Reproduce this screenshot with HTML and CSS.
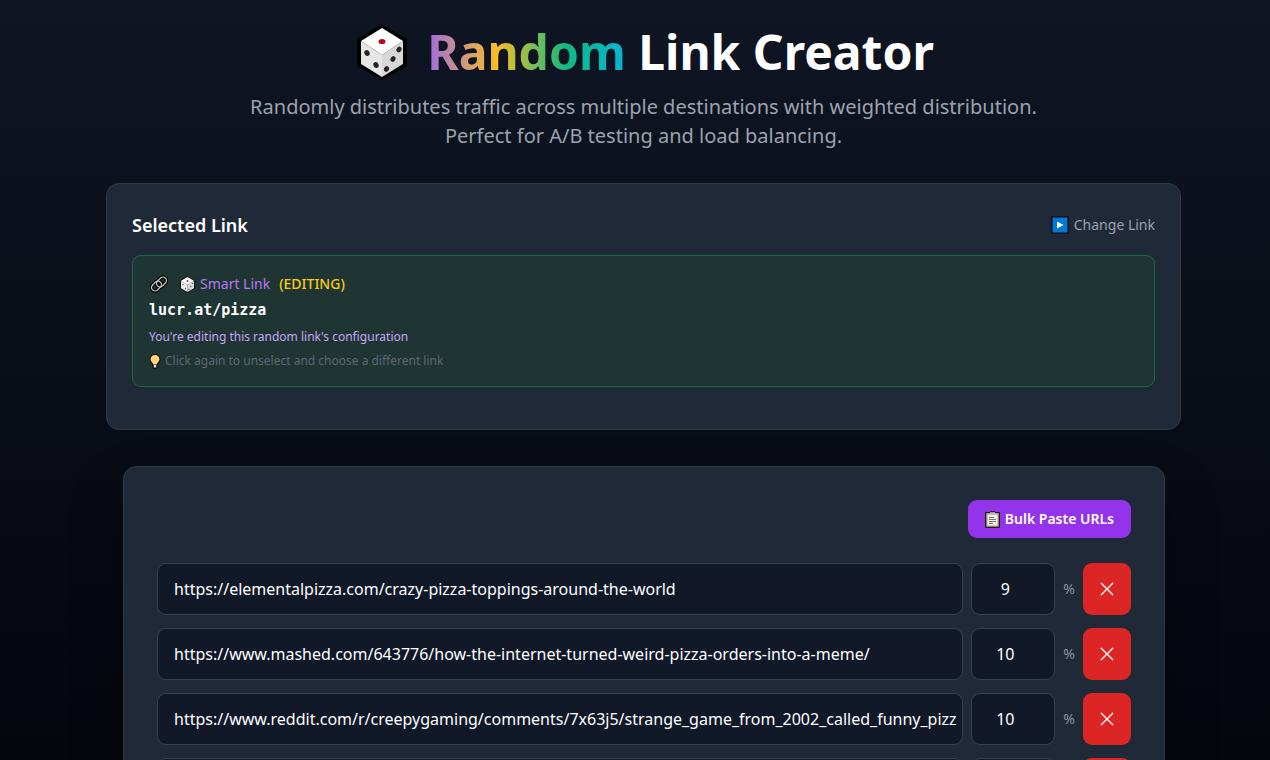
FILE: index.html
```html
<!DOCTYPE html>
<html lang="en">
	<head>
		<meta charset="UTF-8">
		<meta name="viewport" content="width=device-width,initial-scale=1" />
		<title>Random Link Creator</title>
		<link rel="stylesheet" href="styles.css">
	</head>
	<body>
		<svg class="defs" width="0" height="0" aria-hidden="true">
			<symbol id="dice" viewBox="0 0 50 56">
				<path d="M25 0L50 15V42L25 56L0 42V15Z" fill="#000"/>
				<path d="M25 4L46 17L25 31L4 17Z" fill="#fff"/>
				<path d="M4 17L25 31V53L4 40Z" fill="#e6e6e6"/>
				<path d="M46 17L25 31V53L46 40Z" fill="#d8d8d8"/>
				<ellipse cx="25" cy="17.500" rx="3.5" ry="2.6" fill="#b30d1c"/>
				<g fill="#252525">
					<ellipse cx="10" cy="29" rx="2.6" ry="3" transform="rotate(-25 10 29)"/>
					<ellipse cx="19" cy="41" rx="2.6" ry="3" transform="rotate(-25 19 41)"/>
					<ellipse cx="42" cy="25.500" rx="2.4" ry="3" transform="rotate(30 42 25.500)"/>
					<ellipse cx="36" cy="35" rx="2.4" ry="3" transform="rotate(30 36 35)"/>
					<ellipse cx="29.500" cy="45" rx="2.4" ry="3" transform="rotate(30 29.500 45)"/>
				</g>
			</symbol>
			<symbol id="dice-small" viewBox="0 0 15 17">
				<path d="M7.500 0L15 4.500V12.500L7.500 17L0 12.500V4.500Z" fill="#0a0f0f"/>
				<path d="M7.500 1L14 4.800L7.500 8.800L1 4.800Z" fill="#fff"/>
				<path d="M1 4.800L7.500 8.800V16L1 12.200Z" fill="#ececec"/>
				<path d="M14 4.800L7.500 8.800V16L14 12.200Z" fill="#dcdcdc"/>
				<circle cx="7.500" cy="5" r="1" fill="#d0202c"/>
				<g fill="#555"><circle cx="3" cy="8.500" r=".7"/><circle cx="5.500" cy="12.500" r=".7"/><circle cx="12.500" cy="7.500" r=".7"/><circle cx="10.800" cy="10.500" r=".7"/><circle cx="9" cy="13.500" r=".7"/></g>
			</symbol>
		</svg>
		<main class="page">
			<header class="hero">
				<h1><svg class="hero-dice" aria-hidden="true"><use href="#dice"/></svg><span><span class="rainbow">Random</span> Link Creator</span></h1>
				<p>Randomly distributes traffic across multiple destinations with weighted distribution. Perfect for A/B testing and load balancing.</p>
			</header>

			<section class="card">
				<div class="card-head">
					<h2>Selected Link</h2>
					<button type="button" class="change">
						<svg width="18" height="18" viewBox="0 0 18 18" aria-hidden="true"><rect width="18" height="18" rx="1" fill="#0c1118"/><rect x="1.500" y="1.500" width="15" height="15" fill="#0078d7"/><path d="M6 5.500L12.500 9L6 12.500Z" fill="#fff"/></svg>
						Change Link
					</button>
				</div>
				<div class="selected">
					<div class="kind">
						<svg class="chain" width="18" height="18" viewBox="0 0 18 18" fill="none" aria-hidden="true">
							<g stroke="#000" stroke-width="3.600"><rect x="6" y="3.500" width="11" height="7" rx="3.500" transform="rotate(-45 11.500 7)"/><rect x="1" y="7.500" width="11" height="7" rx="3.500" transform="rotate(-45 6.500 11)"/></g>
							<g stroke="#c8c8c8" stroke-width="1.300"><rect x="6" y="3.500" width="11" height="7" rx="3.500" transform="rotate(-45 11.500 7)"/><rect x="1" y="7.500" width="11" height="7" rx="3.500" transform="rotate(-45 6.500 11)"/></g>
						</svg>
						<span class="smart"><svg width="15" height="17" aria-hidden="true"><use href="#dice-small"/></svg>Smart Link</span>
						<span class="editing">(EDITING)</span>
					</div>
					<div class="slug">lucr.at/pizza</div>
					<p class="note">You're editing this random link's configuration</p>
					<p class="hint">
						<svg width="12" height="15" viewBox="0 0 12 15" aria-hidden="true"><path d="M6 0A5.500 5.500 0 0 0 .5 5.500C.5 8 2.500 9 3.500 11V14L5 15H7L8.500 14V11C9.500 9 11.500 8 11.500 5.500A5.500 5.500 0 0 0 6 0Z" fill="#111"/><path d="M6 1A4.500 4.500 0 0 0 1.500 5.500C1.500 7.500 3.800 8.500 4.400 10.500H7.600C8.200 8.500 10.500 7.500 10.500 5.500A4.500 4.500 0 0 0 6 1Z" fill="#ffd679"/><path d="M4.800 11H7.200V13.500H4.800Z" fill="#e6e6e6"/></svg>
						Click again to unselect and choose a different link
					</p>
				</div>
			</section>

			<form class="card links">
				<div class="tools">
					<button type="button" class="bulk">
						<svg width="15" height="17" viewBox="0 0 15 17" aria-hidden="true"><path d="M1 1H5V0H10V1H14Q15 1 15 2V16Q15 17 14 17H1Q0 17 0 16V2Q0 1 1 1Z" fill="#211a1a"/><path d="M1.200 2H13.800V15.800H1.200Z" fill="#b59a80"/><path d="M2.500 3.500H12.500V14.500H2.500Z" fill="#eee"/><path d="M5 1.200H10V3.800H5Z" fill="#bbb"/><path d="M4 6.500H9M4 8.500H11M4 10.500H11M4 12.500H8" stroke="#777"/></svg>
						Bulk Paste URLs
					</button>
				</div>
				<div class="row">
					<input class="url" type="text" aria-label="Destination 1" value="https://elementalpizza.com/crazy-pizza-toppings-around-the-world">
					<input class="weight" type="number" aria-label="Weight 1" value="9">
					<span class="pct">%</span>
					<button type="button" class="remove" aria-label="Remove 1"><svg width="14" height="14" viewBox="0 0 14 14"><path d="M1 1L13 13M13 1L1 13"/></svg></button>
				</div>
				<div class="row">
					<input class="url" type="text" aria-label="Destination 2" value="https://www.mashed.com/643776/how-the-internet-turned-weird-pizza-orders-into-a-meme/">
					<input class="weight" type="number" aria-label="Weight 2" value="10">
					<span class="pct">%</span>
					<button type="button" class="remove" aria-label="Remove 2"><svg width="14" height="14" viewBox="0 0 14 14"><path d="M1 1L13 13M13 1L1 13"/></svg></button>
				</div>
				<div class="row">
					<input class="url" type="text" aria-label="Destination 3" value="https://www.reddit.com/r/creepygaming/comments/7x63j5/strange_game_from_2002_called_funny_pizz">
					<input class="weight" type="number" aria-label="Weight 3" value="10">
					<span class="pct">%</span>
					<button type="button" class="remove" aria-label="Remove 3"><svg width="14" height="14" viewBox="0 0 14 14"><path d="M1 1L13 13M13 1L1 13"/></svg></button>
				</div>
				<div class="row">
					<input class="url" type="text" aria-label="Destination 4">
					<input class="weight" type="number" aria-label="Weight 4">
					<span class="pct">%</span>
					<button type="button" class="remove" aria-label="Remove 4"><svg width="14" height="14" viewBox="0 0 14 14"><path d="M1 1L13 13M13 1L1 13"/></svg></button>
				</div>
			</form>
		</main>
	</body>
</html>
```
FILE: styles.css
```css
*{margin: 0;padding: 0;box-sizing: border-box;}
html{background: #030509;}
body{height: 100vh;overflow: hidden;padding-left: 17px;background: linear-gradient(#0f1523,#04060c);color: #fff;font: 16px/24px "Segoe UI","Noto Sans","Open Sans",sans-serif;}
button,input{font: inherit;color: inherit;border: 0;}
button{cursor: pointer;}
svg{flex: none;}
.defs{position: absolute;}
.page{max-width: 1075px;margin: 0 auto;padding-top: 24px;}

.hero{text-align: center;}
.hero h1{display: flex;justify-content: center;align-items: center;gap: 20px;height: 56px;padding-left: 4px;font-size: 48px;line-height: 56px;font-weight: 700;}
.hero-dice{width: 50px;height: 56px;}
.rainbow{background: linear-gradient(90deg,#9f6be0,#fbbf24 35%,#10b981 70%,#06b6d4);-webkit-background-clip: text;background-clip: text;color: transparent;}
.hero p{max-width: 820px;margin: 12px auto 0;font-size: 20px;line-height: 29px;color: #9ca3af;}

.card{background: #1f2937;border: 1px solid #2f3a49;border-radius: 13px;}
.hero + .card{margin-top: 33px;padding: 25px 25px 42px;}
.card-head{display: flex;justify-content: space-between;align-items: center;height: 32px;margin-bottom: 14px;}
.card-head h2{font-size: 18px;font-weight: 600;}
.change{display: flex;align-items: center;gap: 5px;background: none;color: #9ca3af;font-size: 14px;}
.selected{padding: 16px 16px 13px;border: 1px solid #1a6a3d;border-radius: 9px;background: #1e3533;}
.kind{display: flex;align-items: center;gap: 9px;height: 24px;font-size: 14px;}
.chain{margin: 0 3px 0 1px;}
.smart{display: flex;align-items: center;gap: 5px;color: #b47bf5;}
.editing{color: #facc15;font-weight: 500;}
.slug{height: 29px;font: 700 15px/29px Consolas,"DejaVu Sans Mono","Liberation Mono",monospace;}
.note{font-size: 12px;color: #c9a6f7;}
.hint{display: flex;align-items: center;gap: 4px;font-size: 12px;color: #5d6874;}

.links{display: flex;flex-direction: column;gap: 13px;margin: 36px 16px 0 17px;padding: 33px;box-shadow: 0 26px 53px rgba(0,0,0,.3);}
.tools{display: flex;justify-content: flex-end;margin-bottom: 12px;}
.bulk{display: flex;align-items: center;gap: 5px;height: 38px;padding: 0 17px;border-radius: 9px;background: #9333ea;font-size: 14px;font-weight: 600;}
.row{display: flex;align-items: center;gap: 8px;}
.url,.weight{height: 52px;background: #111827;border: 1px solid #374151;border-radius: 9px;}
.url{flex: 1;min-width: 0;padding-left: 16px;}
.weight{width: 84px;padding-right: 16px;text-align: center;appearance: textfield;-moz-appearance: textfield;}
.weight::-webkit-inner-spin-button{-webkit-appearance: none;margin: 0;}
.pct{font-size: 14px;color: #8b95a3;}
.remove{display: flex;align-items: center;justify-content: center;width: 48px;height: 52px;border-radius: 9px;background: #dc2626;}
.remove path{fill: none;stroke: #fff;stroke-width: 1.4;}
```
